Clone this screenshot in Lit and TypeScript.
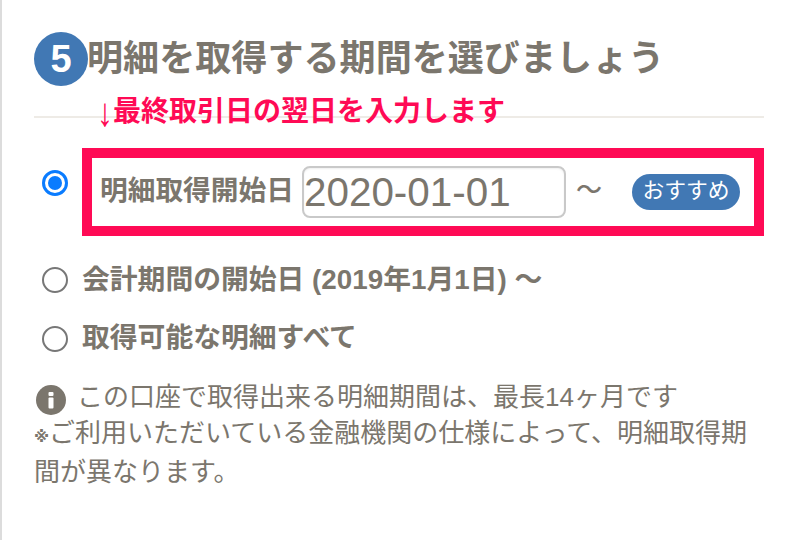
import { LitElement, html, css } from "lit";
import { customElement } from "lit/decorators.js";

@customElement("app-root")
export class AppRoot extends LitElement {
  static styles = css`
    :host { display: block; width: 794px; height: 540px; overflow: hidden; background: #fff; color: #7b766d;
      font-family: "Liberation Sans", "Noto Sans CJK JP", sans-serif; }
    .page { box-sizing: border-box; height: 540px; border-left: 2px solid #dcdcdc; padding: 32px 30px 0 32px; }
    .head { display: flex; height: 84px; border-bottom: 2px solid #eeebe6; align-items: flex-start; }
    .num { flex: none; width: 54px; height: 54px; border-radius: 50%; background: #4178b4; color: #fff; font-size: 38px; font-weight: 700;
      display: flex; align-items: center; justify-content: center; }
    h1 { margin: 0 0 0 -1px; font-size: 36.1px; line-height: 54px; font-weight: 700; white-space: nowrap; }
    .note { display: flex; align-items: center; margin: -23px 0 0 63px; height: 34px; color: #ff0a55; font-size: 28px; font-weight: 700; line-height: 34px; white-space: nowrap; }
    .arrow { width: 16px; font-weight: 400; font-size: 32px; transform: scaleY(1.25); }
    .row { display: flex; align-items: center; }
    .first { margin-top: 19px; align-items: flex-start; }
    .radio { flex: none; width: 26px; height: 26px; margin: 0 14px 0 8px; box-sizing: border-box; border-radius: 50%; border: 2px solid #777; background: #fff; }
    .first .radio { margin-top: 22px; border: 3px solid #0a7cff; padding: 3px; background: #0a7cff content-box; }
    .box { box-sizing: border-box; width: 682px; height: 88px; border: 10px solid #ff0a55; display: flex; align-items: center; padding-left: 8px; }
    .label { width: 202px; font-size: 27.7px; font-weight: 700; white-space: nowrap; margin-top: -9px; }
    .input { box-sizing: border-box; width: 264px; height: 52px; border: 2px solid #c9c9c9; border-radius: 8px; font-size: 40.4px; line-height: 48px; padding-left: 0; box-shadow: inset 0 1px 2px #0001; }
    .tilde { width: 66px; padding-left: 10px; box-sizing: border-box; font-size: 26px; font-weight: 500; margin-top: -10px; }
    .badge { box-sizing: border-box; width: 108px; height: 36px; border-radius: 18px; background: #4178b4; color: #fff; font-size: 21.8px; line-height: 34px; text-align: center; white-space: nowrap; }
    .opt { font-size: 27.8px; font-weight: 700; line-height: 40px; white-space: nowrap; }
    .r2 { margin-top: 24px; }
    .r3 { margin-top: 20px; }
    .r3 .opt { margin-top: -2px; }
    .info { margin-top: 27px; font-size: 26px; line-height: 35px; }
    .line1 { display: flex; align-items: center; margin-left: 2px; padding-bottom: 1px; white-space: nowrap; }
    .line1 span { margin-top: -6px; }
    .i { flex: none; margin-right: 11px; }
    .mark { font-family: "DejaVu Sans", "Noto Sans CJK JP", sans-serif; font-size: 15.5px; font-weight: 700; }
  `;

  render() {
    return html`<div class="page">
      <div class="head"><div class="num">5</div><h1>明細を取得する期間を選びましょう</h1></div>
      <div class="note"><span class="arrow">↓</span>最終取引日の翌日を入力します</div>
      <div class="row first">
        <div class="radio"></div>
        <div class="box">
          <div class="label">明細取得開始日</div>
          <div class="input">2020-01-01</div>
          <div class="tilde">〜</div>
          <div class="badge">おすすめ</div>
        </div>
      </div>
      <div class="row r2"><div class="radio"></div><div class="opt">会計期間の開始日 (2019年1月1日) 〜</div></div>
      <div class="row r3"><div class="radio"></div><div class="opt">取得可能な明細すべて</div></div>
      <div class="info">
        <div class="line1">
          <svg class="i" width="30" height="30" viewBox="0 0 30 30"><circle cx="15" cy="15" r="15" fill="#7b766d"/><rect x="12.5" y="7" width="5" height="4" rx="1" fill="#fff"/><rect x="12.5" y="12.5" width="5" height="11" rx="1" fill="#fff"/></svg>
          <span>この口座で取得出来る明細期間は、最長14ヶ月です</span>
        </div>
        <div><span class="mark">※</span>ご利用いただいている金融機関の仕様によって、明細取得期間が異なります。</div>
      </div>
    </div>`;
  }
}
